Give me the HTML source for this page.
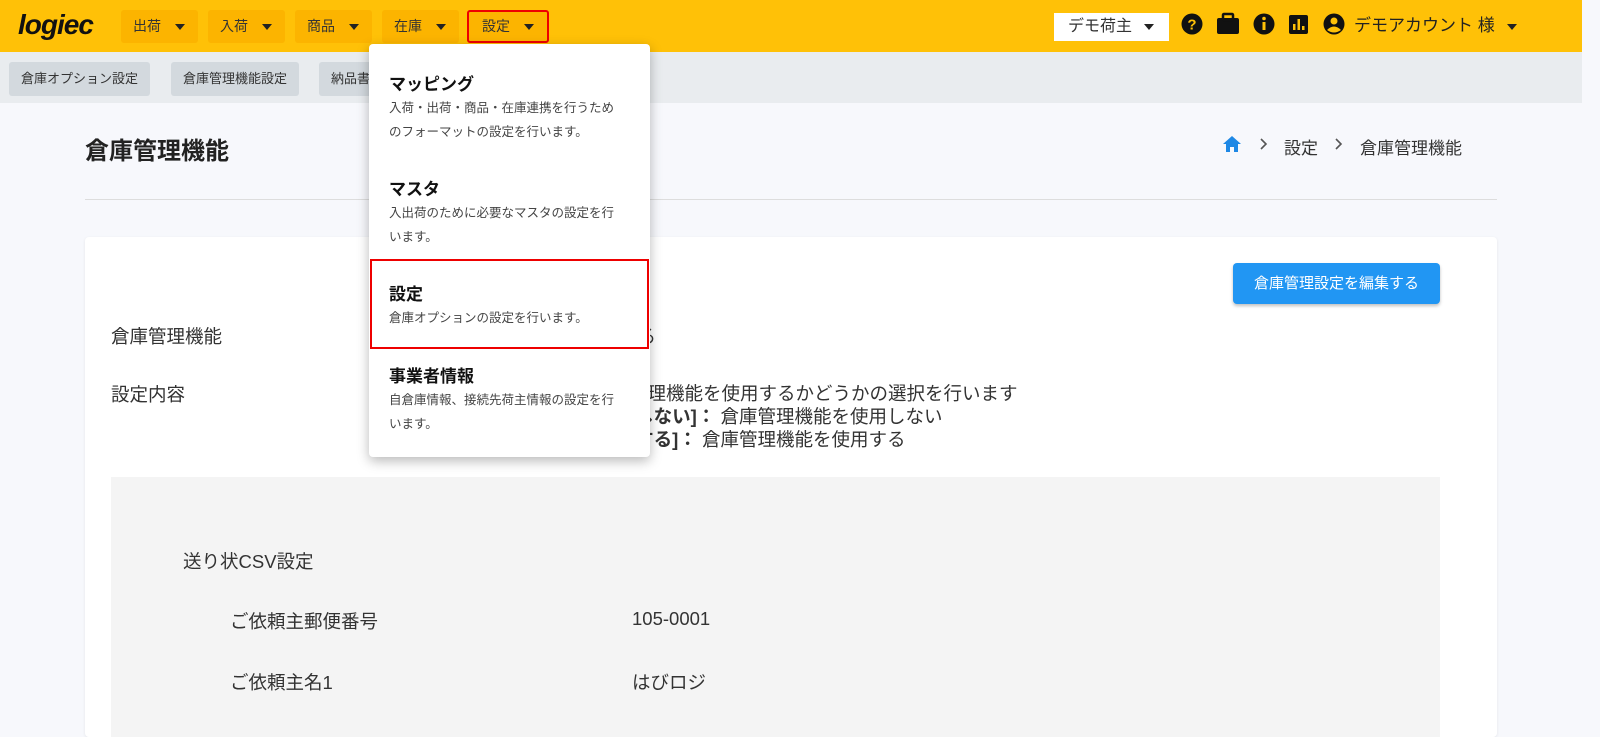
<!DOCTYPE html>
<html><head><meta charset="utf-8"><style>
*{box-sizing:border-box;margin:0;padding:0}
body{width:1600px;height:724px;overflow:hidden;background:#f7f8fc;font-family:"Liberation Sans","Noto Sans CJK JP",sans-serif;color:#222;position:relative}
.abs{position:absolute;white-space:nowrap}
.hdr{left:0;top:0;width:1582px;height:52px;background:#ffc107}
.mb{top:10px;height:33px;background:#fcb400;border-radius:3px;font-size:14px;line-height:33px;padding-left:12px;color:#333}
.car{display:inline-block;width:0;height:0;border-left:5px solid transparent;border-right:5px solid transparent;border-top:6px solid #222;vertical-align:middle;margin-left:14px}
.sub{left:0;top:52px;width:1582px;height:51px;background:#e9ecef}
.sb{top:62px;height:34px;background:#d3d9de;border-radius:3px;font-size:13px;line-height:34px;padding:0 12px;color:#333}
.dd{left:369px;top:44px;width:281px;height:413px;background:#fff;border-radius:4px;box-shadow:0 4px 12px rgba(0,0,0,.28)}
.it{position:absolute;left:20px;width:255px;white-space:nowrap}
.it b{display:block;font-size:17px;font-weight:bold;color:#111}
.it p{font-size:12.5px;line-height:24px;color:#444;margin-top:1px}
.row{font-size:18.5px;color:#333}
</style></head><body>
<div class="abs hdr"></div>
<div class="abs" style="left:18px;top:9px;font:italic 900 28px 'Liberation Sans',sans-serif;color:#111;letter-spacing:-1px">logiec</div>
<div class="abs mb" style="left:121px;width:77px">出荷<span class="car"></span></div>
<div class="abs mb" style="left:208px;width:77px">入荷<span class="car"></span></div>
<div class="abs mb" style="left:295px;width:77px">商品<span class="car"></span></div>
<div class="abs mb" style="left:382px;width:77px">在庫<span class="car"></span></div>
<div class="abs mb" style="left:467px;width:82px;border:2px solid #e00;line-height:29px;padding-left:13px">設定<span class="car"></span></div>
<div class="abs" style="left:1054px;top:13px;width:115px;height:28px;background:#fff;font-size:16px;line-height:28px;padding-left:14px;color:#333">デモ荷主<span class="car" style="margin-left:12px"></span></div>
<svg class="abs" style="left:1180px;top:12px" width="170" height="26" viewBox="0 0 170 26">
<circle cx="12" cy="12" r="10.5" fill="#111"/><text x="12" y="17.5" font-size="15" font-weight="bold" text-anchor="middle" fill="#ffc107" font-family="Liberation Sans">?</text>
<rect x="37" y="6" width="22" height="16" rx="2" fill="#111"/><rect x="43" y="2" width="10" height="6" rx="1" fill="none" stroke="#111" stroke-width="2.5"/>
<circle cx="84" cy="12" r="10.5" fill="#111"/><rect x="82.5" y="10" width="3" height="8" fill="#ffc107"/><circle cx="84" cy="6.5" r="1.8" fill="#ffc107"/>
<rect x="109" y="3" width="19" height="19" rx="2" fill="#111"/><rect x="113" y="12" width="2.5" height="6" fill="#ffc107"/><rect x="117.5" y="7" width="2.5" height="11" fill="#ffc107"/><rect x="122" y="14" width="2.5" height="4" fill="#ffc107"/>
<circle cx="154" cy="12" r="10.5" fill="#111"/><circle cx="154" cy="9" r="3.5" fill="#ffc107"/><path d="M147 18 Q154 11 161 18 Q154 23 147 18Z" fill="#ffc107"/>
</svg>
<div class="abs" style="left:1354px;top:11px;font-size:17px;color:#222">デモアカウント 様<span class="car" style="margin-left:12px"></span></div>

<div class="abs sub"></div>
<div class="abs sb" style="left:9px">倉庫オプション設定</div>
<div class="abs sb" style="left:171px">倉庫管理機能設定</div>
<div class="abs sb" style="left:319px;width:60px">納品書</div>

<div class="abs" style="left:85px;top:131px;font-size:24px;font-weight:bold;color:#222">倉庫管理機能</div>
<svg class="abs" style="left:1222px;top:135px" width="20" height="18" viewBox="0 0 20 18"><path d="M10 1 L1 9 H4 V17 H8 V12 H12 V17 H16 V9 H19Z" fill="#1e88e5"/></svg>
<svg class="abs" style="left:1259px;top:138px" width="10" height="12" viewBox="0 0 10 12"><path d="M2 1 L7 6 L2 11" fill="none" stroke="#555" stroke-width="1.6"/></svg>
<div class="abs" style="left:1284px;top:134px;font-size:17px;color:#333">設定</div>
<svg class="abs" style="left:1334px;top:138px" width="10" height="12" viewBox="0 0 10 12"><path d="M2 1 L7 6 L2 11" fill="none" stroke="#555" stroke-width="1.6"/></svg>
<div class="abs" style="left:1360px;top:134px;font-size:17px;color:#333">倉庫管理機能</div>
<div class="abs" style="left:85px;top:199px;width:1412px;height:1px;background:#ddd"></div>

<div class="abs" style="left:85px;top:237px;width:1412px;height:500px;background:#fff;border-radius:4px;box-shadow:0 1px 3px rgba(0,0,0,.08)"></div>
<div class="abs" style="left:1233px;top:263px;width:207px;height:41px;background:#2196f3;border-radius:4px;color:#fff;font-size:15px;line-height:41px;text-align:center;box-shadow:0 2px 3px rgba(0,0,0,.25)">倉庫管理設定を編集する</div>
<div class="abs row" style="left:111px;top:323px">倉庫管理機能</div>
<div class="abs row" style="left:582px;top:323px">使用する</div>
<div class="abs row" style="left:111px;top:381px">設定内容</div>
<div class="abs row" style="left:592px;top:382px;line-height:23px">倉庫管理機能を使用するかどうかの選択を行います<br><b>[使用しない]：</b> 倉庫管理機能を使用しない<br><b>[使用する]：</b> 倉庫管理機能を使用する</div>
<div class="abs" style="left:111px;top:477px;width:1329px;height:260px;background:#f4f4f4"></div>
<div class="abs row" style="left:183px;top:548px">送り状CSV設定</div>
<div class="abs row" style="left:230px;top:608px">ご依頼主郵便番号</div>
<div class="abs row" style="left:632px;top:608px">105-0001</div>
<div class="abs row" style="left:230px;top:669px">ご依頼主名1</div>
<div class="abs row" style="left:632px;top:669px">はびロジ</div>

<div class="abs dd">
<div class="it" style="top:26px"><b>マッピング</b><p>入荷・出荷・商品・在庫連携を行うため<br>のフォーマットの設定を行います。</p></div>
<div class="it" style="top:131px"><b>マスタ</b><p>入出荷のために必要なマスタの設定を行<br>います。</p></div>
<div style="position:absolute;left:1px;top:215px;width:279px;height:90px;border:2px solid #e00"></div>
<div class="it" style="top:236px"><b>設定</b><p>倉庫オプションの設定を行います。</p></div>
<div class="it" style="top:318px"><b>事業者情報</b><p>自倉庫情報、接続先荷主情報の設定を行<br>います。</p></div>
</div>
</body></html>
